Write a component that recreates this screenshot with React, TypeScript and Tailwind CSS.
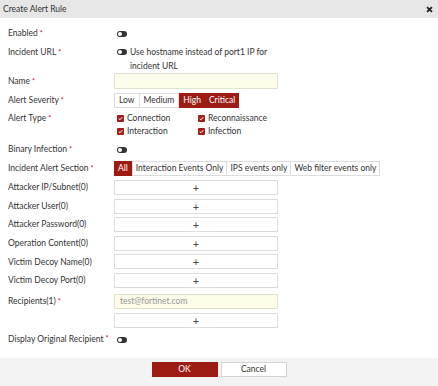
import React from "react";

const RED = "bg-[#9c1b13]";

function Toggle() {
  return (
    <span className="inline-flex w-[10px] h-[6px] rounded-full bg-[#333] items-center pl-[1px] shrink-0">
      <span className="w-[4px] h-[4px] rounded-full bg-white" />
    </span>
  );
}

function Check({ label }: { label: string }) {
  return (
    <div className="flex items-center h-[13px] gap-[3px]">
      <span className="w-[7px] h-[7px] bg-[#a51d15] rounded-[1px] flex items-center justify-center">
        <svg width="5" height="5" viewBox="0 0 10 10">
          <path d="M1.5 5.2 L4 7.6 L8.6 2.4" stroke="white" strokeWidth="2" fill="none" />
        </svg>
      </span>
      <span>{label}</span>
    </div>
  );
}

function Label({ text, req }: { text: string; req?: boolean }) {
  return (
    <div className="w-[106px] shrink-0 flex items-center">
      <span>{text}</span>
      {req && <span className="text-[#d0021b] ml-[2px] text-[7px]">*</span>}
    </div>
  );
}

function PlusBox({ mt }: { mt: string }) {
  return (
    <div className={`w-[164px] h-[15px] border border-[#dcdcdc] bg-white flex items-center justify-center text-[#444] text-[11px] ${mt}`}>
      +
    </div>
  );
}

function PlusRow({ label, mt }: { label: string; mt: string }) {
  return (
    <div className={`flex items-center h-[15px] ${mt}`}>
      <Label text={label} />
      <PlusBox mt="" />
    </div>
  );
}

export default function App() {
  return (
    <div className="w-[438px] h-[386px] bg-white flex flex-col overflow-hidden text-[8.5px] text-[#333] font-['Lato','Noto_Sans',sans-serif] leading-none">
      <div className="h-[18px] bg-[#e6e6e6] flex items-center justify-between px-[3px] shrink-0">
        <span className="text-[8.5px] text-[#333]">Create Alert Rule</span>
        <svg width="7" height="7" viewBox="0 0 10 10" className="mr-[2px]">
          <path d="M1.5 1.5 L8.5 8.5 M8.5 1.5 L1.5 8.5" stroke="#222" strokeWidth="2.6" />
        </svg>
      </div>

      <div className="flex flex-col pl-[8px]">
        <div className="flex items-center h-[14px] mt-[8px]">
          <Label text="Enabled" req />
          <span className="ml-[3px]"><Toggle /></span>
        </div>

        <div className="flex h-[28px] mt-[5px]">
          <div className="w-[106px] shrink-0 flex items-start h-[14px]">
            <div className="h-[14px] flex items-center">
              <span>Incident URL</span>
              <span className="text-[#d0021b] ml-[2px] text-[7px]">*</span>
            </div>
          </div>
          <div className="flex flex-col ml-[3px]">
            <div className="h-[14px] flex items-center gap-[3px]">
              <Toggle />
              <span>Use hostname instead of port1 IP for</span>
            </div>
            <div className="h-[14px] flex items-center ml-[13px]">incident URL</div>
          </div>
        </div>

        <div className="flex items-center h-[16px]">
          <Label text="Name" req />
          <div className="w-[164px] h-[16px] border border-[#e2e2d0] bg-[#fdfde9]" />
        </div>

        <div className="flex items-center h-[15px] mt-[4px]">
          <Label text="Alert Severity" req />
          <div className="flex h-[15px]">
            <div className="px-[4px] border border-[#dcdcdc] flex items-center">Low</div>
            <div className="px-[4px] border-y border-r border-[#dcdcdc] flex items-center">Medium</div>
            <div className={`px-[4px] ${RED} text-white flex items-center`}>High</div>
            <div className={`px-[4px] ${RED} text-white flex items-center`}>Critical</div>
          </div>
        </div>

        <div className="flex h-[26px] mt-[4px]">
          <div className="w-[106px] shrink-0 h-[13px] flex items-center">
            <span>Alert Type</span>
            <span className="text-[#d0021b] ml-[2px] text-[7px]">*</span>
          </div>
          <div className="grid grid-cols-[81px_auto] ml-[3px]">
            <Check label="Connection" />
            <Check label="Reconnaissance" />
            <Check label="Interaction" />
            <Check label="Infection" />
          </div>
        </div>

        <div className="flex items-center h-[14px] mt-[4px]">
          <Label text="Binary Infection" req />
          <span className="ml-[3px]"><Toggle /></span>
        </div>

        <div className="flex items-center h-[15px] mt-[5px]">
          <Label text="Incident Alert Section" req />
          <div className="flex h-[15px]">
            <div className={`px-[4px] ${RED} text-white flex items-center`}>All</div>
            <div className="px-[3px] border border-[#dcdcdc] flex items-center">Interaction Events Only</div>
            <div className="px-[3px] border-y border-r border-[#dcdcdc] flex items-center">IPS events only</div>
            <div className="px-[3px] border-y border-r border-[#dcdcdc] flex items-center">Web filter events only</div>
          </div>
        </div>

        <PlusRow label="Attacker IP/Subnet(0)" mt="mt-[4px]" />
        <PlusRow label="Attacker User(0)" mt="mt-[3.6px]" />
        <PlusRow label="Attacker Password(0)" mt="mt-[3.6px]" />
        <PlusRow label="Operation Content(0)" mt="mt-[3.6px]" />
        <PlusRow label="Victim Decoy Name(0)" mt="mt-[3.6px]" />
        <PlusRow label="Victim Decoy Port(0)" mt="mt-[3.6px]" />

        <div className="flex mt-[6px]">
          <div className="w-[106px] shrink-0 h-[15px] flex items-center">
            <span>Recipients(1)</span>
            <span className="text-[#d0021b] ml-[2px] text-[7px]">*</span>
          </div>
          <div className="flex flex-col">
            <div className="w-[164px] h-[15px] border border-[#e2e2d0] bg-[#fcfce7] flex items-center px-[5px] text-[#9a9a9a]">
              test@fortinet.com
            </div>
            <PlusBox mt="mt-[4px]" />
          </div>
        </div>

        <div className="flex items-center h-[14px] mt-[4px]">
          <Label text="Display Original Recipient" req />
          <span className="ml-[3px]"><Toggle /></span>
        </div>
      </div>

      <div className="mt-auto h-[28px] bg-[#f3f3f3] flex justify-center items-start pt-[4px] gap-[3px] shrink-0">
        <div className={`w-[66px] h-[15px] ${RED} text-white flex items-center justify-center`}>OK</div>
        <div className="w-[66px] h-[15px] bg-white border border-[#d4d4d4] flex items-center justify-center">Cancel</div>
      </div>
    </div>
  );
}
